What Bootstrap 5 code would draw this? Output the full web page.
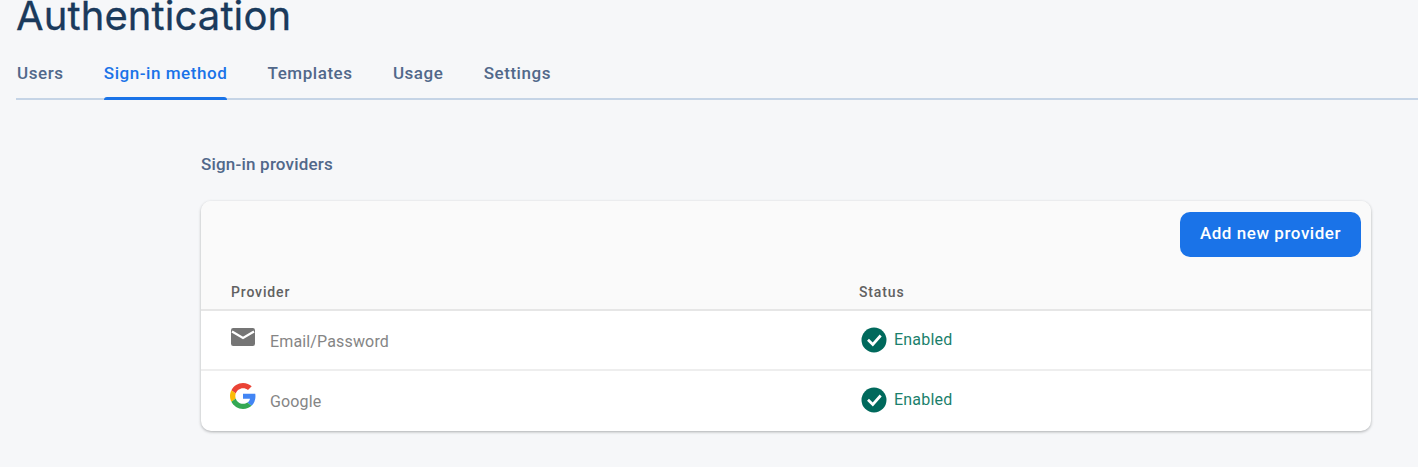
<!DOCTYPE html>
<html lang="en"><head><meta charset="utf-8"><title>Authentication</title>
<link href="https://cdn.jsdelivr.net/npm/bootstrap@5.3.0/dist/css/bootstrap.min.css" rel="stylesheet">
<style>
html,body{height:467px;overflow:hidden}
body{background:#f6f7f9;font-family:Roboto,sans-serif;color:#757575}
.page-head{padding:0 0 0 16px;height:100px}
.page-title{font-family:Inter,Roboto,sans-serif;font-weight:400;font-size:40px;line-height:44px;color:#1a3a5c;margin:-6px 0 0;letter-spacing:.1px;-webkit-text-stroke:.3px #1a3a5c;height:43px}
.tab-row{border-bottom:2px solid #c5d4e6;height:63px;gap:40.3px;list-style:none;margin:0;padding:0}
.tab-link{display:block;height:63px;padding-top:24px;font-size:17px;font-weight:500;line-height:24px;color:#51688a;letter-spacing:.55px;text-decoration:none;margin-left:1px}
.tab-row li+li .tab-link{margin-left:0}
.tab-link.is-current{color:#1a73e8;position:relative}
.tab-link.is-current::after{content:"";position:absolute;left:0;right:0;bottom:0;height:3px;background:#1a73e8;border-radius:3px 3px 0 0}
.providers-wrap{margin:0 47px 0 201px}
.section-label{font-size:17px;font-weight:500;line-height:24px;color:#51688a;margin:58px 0 25px;letter-spacing:.2px;height:24px}
.prov-card{border:0;border-radius:10px;height:230px;overflow:hidden;background:#fff;box-shadow:0 1px 3px rgba(60,64,67,.4)}
.prov-top{height:70px;background:#fafafa;padding:11px 10px 0 0}
.add-btn{background:#1a73e8;border:0;color:#fff;font-size:17px;font-weight:500;letter-spacing:.55px;height:45px;width:181px;border-radius:10px;padding:0 0 2px}
.prov-head{height:40px;background:#fafafa;border-bottom:2px solid #e6e6e6;font-size:14px;font-weight:500;letter-spacing:.85px;color:#616161;padding-top:5px}
.col-prov{width:658px;padding-left:30px;flex:none}
.prov-line{height:60px;border-bottom:2px solid #eeeeee;font-size:16px;color:#858585}
.prov-line:last-child{border-bottom-color:transparent}
.prov-label{padding-top:3px;letter-spacing:.15px}
.prov-icon{width:24px;height:24px;flex:none;margin-right:15px}
.google-mark{width:26px;height:26px;margin-left:-1px;margin-right:14px}
.status-on{color:#1b7f6c;font-size:16px;letter-spacing:.2px;gap:7px}
.status-on svg{flex:none;margin-left:2px}
</style></head>
<body>
<div class="page-head">
<h1 class="page-title">Authentication</h1>
<ul class="tab-row d-flex">
<li><a class="tab-link" href="#">Users</a></li>
<li><a class="tab-link is-current" href="#">Sign-in method</a></li>
<li><a class="tab-link" href="#">Templates</a></li>
<li><a class="tab-link" href="#">Usage</a></li>
<li><a class="tab-link" href="#">Settings</a></li>
</ul>
</div>
<div class="providers-wrap">
<div class="section-label">Sign-in providers</div>
<div class="card prov-card">
<div class="prov-top d-flex justify-content-end"><button class="btn add-btn" type="button">Add new provider</button></div>
<div class="prov-head d-flex align-items-center"><div class="col-prov">Provider</div><div>Status</div></div>
<div class="prov-line d-flex align-items-center">
<div class="col-prov d-flex align-items-center">
<svg class="prov-icon mb-1" viewBox="0 0 24 24"><path fill="#757575" d="M2.200 2h19.600A2.200 2.200 0 0 1 24 4.200v13.600a2.200 2.200 0 0 1-2.200 2.200H2.200A2.200 2.200 0 0 1 0 17.800V4.200A2.200 2.200 0 0 1 2.200 2z"/><path fill="none" stroke="#fff" stroke-width="2.200" d="M1 5.500l11 6.500 11-6.500"/></svg>
<span class="prov-label">Email/Password</span></div>
<div class="status-on d-flex align-items-center">
<svg width="26" height="26" viewBox="0 0 26 26"><circle cx="13" cy="13" r="12.500" fill="#00695c"/><path fill="none" stroke="#fff" stroke-width="2.700" d="M7 12.800l4.800 4.700 7.900-9"/></svg>
<span>Enabled</span></div>
</div>
<div class="prov-line d-flex align-items-center">
<div class="col-prov d-flex align-items-center">
<svg class="prov-icon google-mark mb-2" viewBox="0 0 48 48"><path fill="#ea4335" d="M24 9.500c3.500 0 6.700 1.200 9.200 3.600l6.900-6.900C35.900 2.400 30.500 0 24 0 14.600 0 6.500 5.400 2.600 13.200l8 6.200C12.400 13.700 17.700 9.500 24 9.500z"/><path fill="#4285f4" d="M47 24.500c0-1.600-.1-3.100-.4-4.500H24v9h12.900c-.6 3-2.200 5.500-4.800 7.200l7.700 6C44.300 38 47 31.800 47 24.500z"/><path fill="#fbbc05" d="M10.600 28.600c-.5-1.400-.8-3-.8-4.600s.3-3.200.8-4.600l-8-6.200C1 16.500 0 20.100 0 24s1 7.500 2.600 10.800z"/><path fill="#34a853" d="M24 48c6.500 0 11.900-2.100 15.800-5.800l-7.700-6c-2.100 1.400-4.900 2.300-8.100 2.300-6.300 0-11.600-4.200-13.400-9.900l-8 6.200C6.500 42.600 14.600 48 24 48z"/></svg>
<span class="prov-label">Google</span></div>
<div class="status-on d-flex align-items-center">
<svg width="26" height="26" viewBox="0 0 26 26"><circle cx="13" cy="13" r="12.500" fill="#00695c"/><path fill="none" stroke="#fff" stroke-width="2.700" d="M7 12.800l4.800 4.700 7.900-9"/></svg>
<span>Enabled</span></div>
</div>
</div>
</div>
</body></html>
